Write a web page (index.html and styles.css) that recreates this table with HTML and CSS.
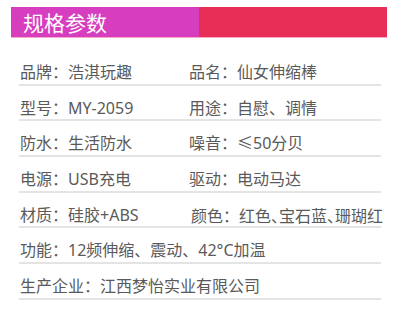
FILE: index.html
```html
<!DOCTYPE html>
<html lang="zh-CN">
<head>
<meta charset="utf-8">
<link rel="stylesheet" href="styles.css">
</head>
<body>
<div class="header">
  <div class="header-left">规格参数</div>
  <div class="header-right"></div>
</div>
<div class="specs">
  <div class="row"><div class="cell left">品牌：浩淇玩趣</div><div class="cell">品名：仙女伸缩棒</div></div>
  <div class="row"><div class="cell left">型号：MY-2059</div><div class="cell">用途：自慰、调情</div></div>
  <div class="row"><div class="cell left">防水：生活防水</div><div class="cell">噪音：≤50分贝</div></div>
  <div class="row"><div class="cell left">电源：USB充电</div><div class="cell">驱动：电动马达</div></div>
  <div class="row"><div class="cell left">材质：硅胶+ABS</div><div class="cell shift">颜色：红色<span class="half">、</span>宝石蓝<span class="half">、</span>珊瑚红</div></div>
  <div class="row"><div class="cell">功能：12频伸缩、震动、42°C加温</div></div>
  <div class="row"><div class="cell">生产企业：江西梦怡实业有限公司</div></div>
</div>
</body>
</html>
```
FILE: styles.css
```css
html, body {
  margin: 0;
  padding: 0;
  background: #ffffff;
}
body {
  width: 400px;
  height: 330px;
  overflow: hidden;
  font-family: "Noto Sans CJK SC", "Noto Sans", sans-serif;
}
.header {
  display: flex;
  margin: 7px 13px 0 11px;
  height: 30px;
  border-bottom: 1px solid #f6a9c6;
}
.header-left {
  flex: 0 0 188px;
  background: #d73dbf;
  color: #ffffff;
  font-size: 21px;
  line-height: 30px;
  padding-left: 12px;
  box-sizing: border-box;
}
.header-right {
  flex: 1;
  background: #e82d57;
}
.specs {
  margin: 12px 0 0 19px;
  width: 362px;
}
.row {
  display: flex;
  height: 33.67px;
  border-bottom: 2px solid #e4e4e4;
}
.cell {
  font-family: "Noto Sans", "Noto Sans CJK SC", sans-serif;
  font-size: 16px;
  color: #5a5a5a;
  line-height: 20px;
  padding-top: 12px;
  padding-left: 1px;
  white-space: nowrap;
}
.left {
  flex: 0 0 169px;
  box-sizing: border-box;
}
.shift {
  padding-left: 3px;
}
.half {
  font-family: "Noto Sans CJK SC", sans-serif;
  font-feature-settings: "halt" 1;
}
```
